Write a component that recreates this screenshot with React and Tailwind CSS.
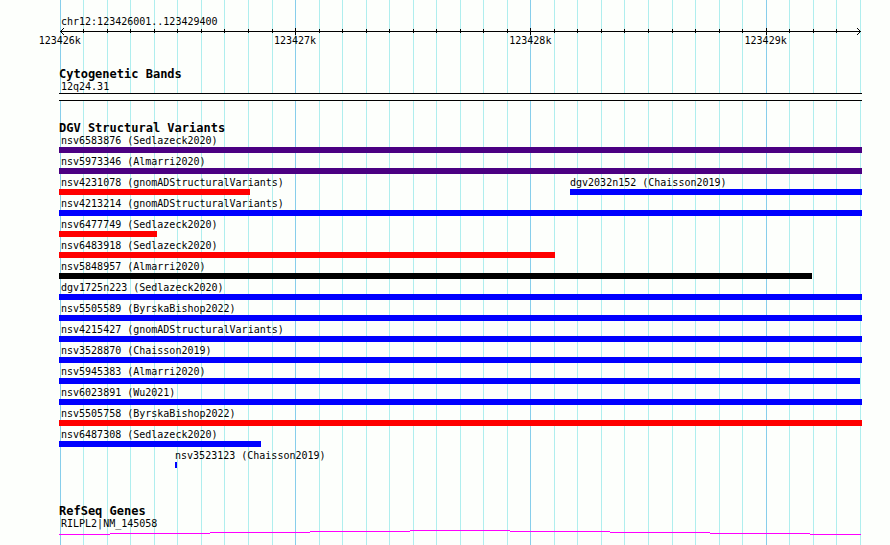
import React from 'react';

// visible range: chr12:123426001..123429400, one tick every 100 bp
const TICK_COUNT = 35;
const GRID_START = 0.0934;
const GRID_STEP = 2.93026;

const tickLeft = (index) => `${GRID_START + index * GRID_STEP}%`;

const ticks = Array.from({ length: TICK_COUNT }, (_, index) => ({
  index,
  major: index % 10 === 0,
  label: index % 10 === 0 ? `${123426 + index / 10}k` : null
}));

const COLORS = {
  purple: 'bg-[#4b0082]',
  red: 'bg-[#ff0000]',
  blue: 'bg-[#0000ff]',
  black: 'bg-black'
};

// start and width are percentages of the track
const variantRows = [
  [{ name: 'nsv6583876 (Sedlazeck2020)', start: 0, width: 100, color: 'purple' }],
  [{ name: 'nsv5973346 (Almarri2020)', start: 0, width: 100, color: 'purple' }],
  [
    { name: 'nsv4231078 (gnomADStructuralVariants)', start: 0, width: 23.79, color: 'red' },
    { name: 'dgv2032n152 (Chaisson2019)', start: 63.64, width: 36.36, color: 'blue' }
  ],
  [{ name: 'nsv4213214 (gnomADStructuralVariants)', start: 0, width: 100, color: 'blue' }],
  [{ name: 'nsv6477749 (Sedlazeck2020)', start: 0, width: 12.2, color: 'red' }],
  [{ name: 'nsv6483918 (Sedlazeck2020)', start: 0, width: 61.77, color: 'red' }],
  [{ name: 'nsv5848957 (Almarri2020)', start: 0, width: 93.77, color: 'black' }],
  [{ name: 'dgv1725n223 (Sedlazeck2020)', start: 0, width: 100, color: 'blue' }],
  [{ name: 'nsv5505589 (ByrskaBishop2022)', start: 0, width: 100, color: 'blue' }],
  [{ name: 'nsv4215427 (gnomADStructuralVariants)', start: 0, width: 100, color: 'blue' }],
  [{ name: 'nsv3528870 (Chaisson2019)', start: 0, width: 100, color: 'blue' }],
  [{ name: 'nsv5945383 (Almarri2020)', start: 0, width: 99.75, color: 'blue' }],
  [{ name: 'nsv6023891 (Wu2021)', start: 0, width: 100, color: 'blue' }],
  [{ name: 'nsv5505758 (ByrskaBishop2022)', start: 0, width: 100, color: 'red' }],
  [{ name: 'nsv6487308 (Sedlazeck2020)', start: 0, width: 25.16, color: 'blue' }],
  [{ name: 'nsv3523123 (Chaisson2019)', start: 14.45, width: 0.25, color: 'blue' }]
];

const GridLines = () => (
  <div className="absolute inset-0" aria-hidden="true">
    {ticks.map(({ index, major }) => (
      <div
        key={index}
        className={`absolute inset-y-0 w-px ${major ? 'bg-[#87ceeb]' : 'bg-[#afeeee]'}`}
        style={{ left: tickLeft(index) }}
      />
    ))}
  </div>
);

const Ruler = () => (
  <div className="relative h-[21px]">
    <div className="absolute left-px right-px top-[3px] h-px bg-black" />
    <svg className="absolute left-px top-0 w-1 h-[7px]" viewBox="0 0 4 7" shapeRendering="crispEdges">
      <path d="M0 3h1v1h-1zM1 2h1v1h-1zM1 4h1v1h-1zM2 1h1v1h-1zM2 5h1v1h-1zM3 0h1v1h-1zM3 6h1v1h-1z" />
    </svg>
    <svg className="absolute right-px top-0 w-1 h-[7px]" viewBox="0 0 4 7" shapeRendering="crispEdges">
      <path d="M3 3h1v1h-1zM2 2h1v1h-1zM2 4h1v1h-1zM1 1h1v1h-1zM1 5h1v1h-1zM0 0h1v1h-1zM0 6h1v1h-1z" />
    </svg>
    {ticks.slice(1, -1).map(({ index, major }) => (
      <div
        key={index}
        className={`absolute w-px bg-black ${major ? 'top-0 h-[7px]' : 'top-px h-1'}`}
        style={{ left: tickLeft(index) }}
      />
    ))}
    {ticks.filter((tick) => tick.label).map(({ index, label }) => (
      <span
        key={label}
        className="absolute top-[5px] -translate-x-1/2 leading-[15px]"
        style={{ left: tickLeft(index) }}
      >
        {label}
      </span>
    ))}
  </div>
);

const TrackTitle = ({ children }) => (
  <h2 className="h-3 text-[12px] leading-[16px] font-bold">{children}</h2>
);

const Label = ({ inset = true, children }) => (
  <div className={`h-[15px] leading-[17px] whitespace-nowrap ${inset ? 'pl-0.5' : ''}`}>
    {children}
  </div>
);

const Feature = ({ name, start, width, color }) => (
  <div className="col-start-1 row-start-1" style={{ paddingLeft: `${start}%` }}>
    <Label inset={start === 0}>{name}</Label>
    <div
      className={`h-[6px] ${COLORS[color]}`}
      style={{ width: `${(width / (100 - start)) * 100}%` }}
    />
  </div>
);

const App = () => {
  return (
    <div className="min-h-screen bg-[#fdfffc] overflow-hidden">
      <main className="relative min-h-screen ml-[59px] mr-7 pt-3.5 text-[10px] text-black font-['DejaVu_Sans_Mono',monospace]">
        <GridLines />
        <div className="relative">
          <h1 className="pl-0.5 h-[14px] leading-[15px]">chr12:123426001..123429400</h1>
          <Ruler />

          <section className="pt-[17px]">
            <TrackTitle>Cytogenetic Bands</TrackTitle>
            <Label>12q24.31</Label>
            <div className="h-2 border-y border-black bg-[#fdfffc]" />
          </section>

          <section className="pt-[19px]">
            <TrackTitle>DGV Structural Variants</TrackTitle>
            {variantRows.map((row) => (
              <div key={row[0].name} className="grid">
                {row.map((variant) => (
                  <Feature key={variant.name} {...variant} />
                ))}
              </div>
            ))}
          </section>

          <section className="pt-[35px]">
            <TrackTitle>RefSeq Genes</TrackTitle>
            <Label>RILPL2|NM_145058</Label>
            <svg
              className="block w-full h-[5px]"
              viewBox="0 0 803 5"
              preserveAspectRatio="none"
              shapeRendering="crispEdges"
              fill="#ff00ff"
            >
              <path d="M0 4h51v1H0zM51 3h100v1H51zM151 2h100v1H151zM251 1h100v1H251zM351 0h100v1H351zM451 1h100v1H451zM551 2h100v1H551zM651 3h100v1H651zM751 4h51v1H751z" />
            </svg>
          </section>
        </div>
      </main>
    </div>
  );
};

export default App;
